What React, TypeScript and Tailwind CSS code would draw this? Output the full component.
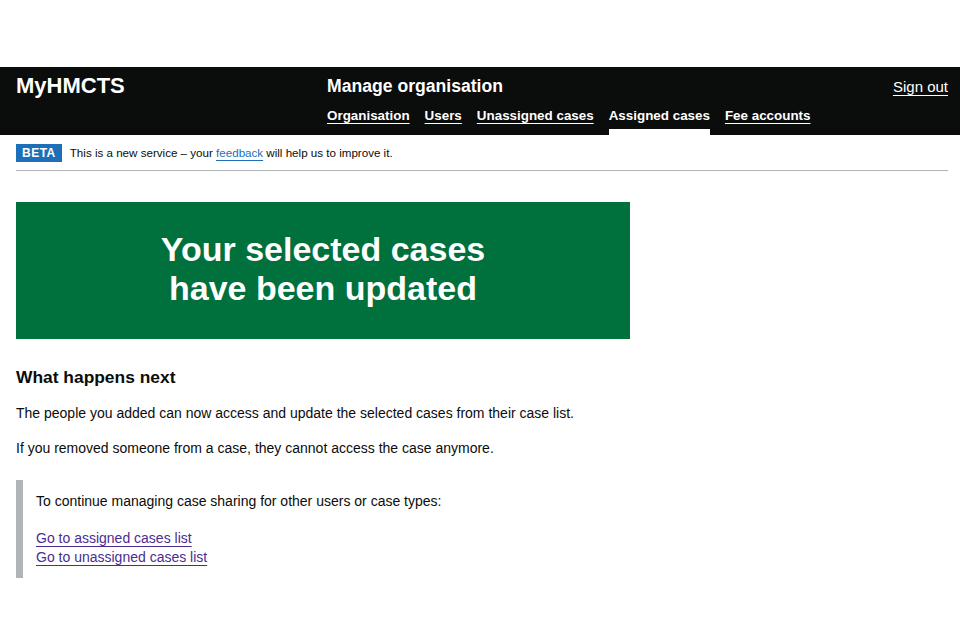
import React from 'react';

const font = { fontFamily: '"Liberation Sans", Arial, sans-serif' };

const navItems = [
  { label: 'Organisation', active: false },
  { label: 'Users', active: false },
  { label: 'Unassigned cases', active: false },
  { label: 'Assigned cases', active: true },
  { label: 'Fee accounts', active: false },
];

export default function App() {
  return (
    <div className="w-[960px] h-[640px] bg-white text-[#0b0c0c] overflow-hidden" style={font}>
      <div className="h-[67px]" />
      {/* header */}
      <header className="h-[68px] bg-[#0b0c0c] text-white pl-4 pr-3 flex">
        <div className="w-[311px] pt-[5px]">
          <span className="text-[22px] font-bold leading-[28px]">MyHMCTS</span>
        </div>
        <div className="flex-1 flex flex-col">
          <div className="pt-[8px] text-[17.6px] font-bold leading-[22px]">Manage organisation</div>
          <nav className="flex gap-[15px] mt-[9px] text-[13.4px] font-bold">
            {navItems.map((n) => (
              <div key={n.label} className={`flex flex-col h-[29px] ${n.active ? 'border-b-[6px] border-white' : ''}`}>
                <span className={`leading-[20px] ${n.active ? '' : 'underline underline-offset-[3px] decoration-[1px]'}`}>{n.label}</span>
              </div>
            ))}
          </nav>
        </div>
        <div className="pt-[10px] text-[15px] leading-[20px]">
          <span className="underline underline-offset-[3px] decoration-[1px]">Sign out</span>
        </div>
      </header>

      {/* beta banner */}
      <div className="ml-4 mr-3 border-b border-[#b1b4b6] pt-[9px] pb-[8px] flex items-center gap-[8px]">
        <span className="bg-[#1d70b8] text-white font-bold text-[12px] leading-[18px] px-[6px] tracking-[0.5px]">BETA</span>
        <span className="text-[11.6px] leading-[18px]">
          This is a new service – your{' '}
          <span className="text-[#1d70b8] underline underline-offset-[3px]">feedback</span> will help us to improve it.
        </span>
      </div>

      <main className="px-4 pt-[31px]">
        <div className="w-[614px] h-[137px] bg-[#00703c] text-white flex items-center justify-center">
          <h1 className="text-[34px] font-bold leading-[39px] text-center pb-[4px]">
            Your selected cases
            <br />
            have been updated
          </h1>
        </div>

        <h2 className="mt-[26px] text-[17.4px] font-bold leading-[24px]">What happens next</h2>
        <p className="mt-[14px] text-[14px] leading-[20px]">
          The people you added can now access and update the selected cases from their case list.
        </p>
        <p className="mt-[15px] text-[14px] leading-[20px]">
          If you removed someone from a case, they cannot access the case anymore.
        </p>

        <div className="mt-[22px] w-[614px] border-l-[7px] border-[#b1b4b6] pl-[13px] pt-[11px] pb-[11px] text-[14px] leading-[20px]">
          <p>To continue managing case sharing for other users or case types:</p>
          <div className="mt-[18px] flex flex-col text-[#4c2c92]">
            <span className="underline underline-offset-[3px] leading-[19px]">Go to assigned cases list</span>
            <span className="underline underline-offset-[3px] leading-[19px]">Go to unassigned cases list</span>
          </div>
        </div>
      </main>
    </div>
  );
}
